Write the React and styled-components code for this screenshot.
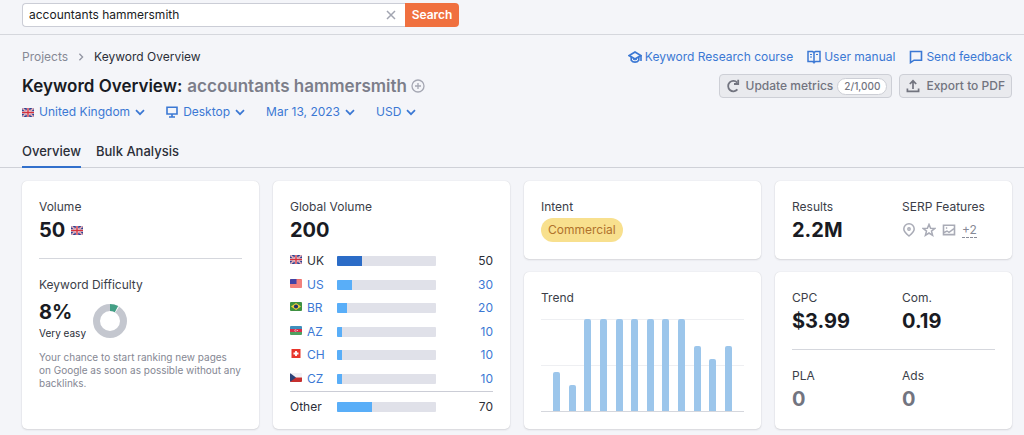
import React from 'react'
import styled, { createGlobalStyle } from 'styled-components'

const countries = [
    { code: 'UK', flag: 'uk', value: 50, share: 25, current: true },
    { code: 'US', flag: 'us', value: 30, share: 15 },
    { code: 'BR', flag: 'br', value: 20, share: 10 },
    { code: 'AZ', flag: 'az', value: 10, share: 5 },
    { code: 'CH', flag: 'ch', value: 10, share: 5 },
    { code: 'CZ', flag: 'cz', value: 10, share: 5 },
]

const trend = [42, 28, 100, 100, 100, 100, 100, 100, 100, 71, 56, 71]

const flags = {
    uk: (
        <>
            <rect width="12" height="8" fill="#2f3f8f" />
            <path d="M0 0L12 8M12 0L0 8" stroke="#f3eef2" strokeWidth="1.4" />
            <path d="M0 0L12 8M12 0L0 8" stroke="#d8434e" strokeWidth="0.6" />
            <path d="M6 0V8M0 4H12" stroke="#f3eef2" strokeWidth="2.4" />
            <path d="M6 0V8M0 4H12" stroke="#d5323f" strokeWidth="1.4" />
        </>
    ),
    us: (
        <>
            <rect width="12" height="9" fill="#f0706c" />
            <path d="M0 2H12M0 4H12M0 6H12M0 8H12" stroke="#f7a19c" strokeWidth="0.7" />
            <rect width="6.5" height="5" fill="#4143a5" />
        </>
    ),
    br: (
        <>
            <rect width="12" height="9" fill="#3f9142" />
            <path d="M1 4.5L6 1L11 4.5L6 8Z" fill="#f2d13c" />
            <circle cx="6" cy="4.5" r="2.1" fill="#23336b" />
        </>
    ),
    az: (
        <>
            <rect width="12" height="3" fill="#3f8fbd" />
            <rect y="3" width="12" height="3" fill="#d8304a" />
            <rect y="6" width="12" height="3" fill="#4fa05f" />
            <circle cx="5.6" cy="4.5" r="1.1" fill="#fff" />
            <circle cx="6" cy="4.5" r="0.8" fill="#d8304a" />
            <circle cx="7.3" cy="4.5" r="0.5" fill="#fff" />
        </>
    ),
    ch: (
        <>
            <rect x="1.5" width="9" height="9" fill="#e8352b" />
            <path d="M6 2V7M3.5 4.5H8.5" stroke="#fff" strokeWidth="1.8" />
        </>
    ),
    cz: (
        <>
            <rect width="12" height="4.5" fill="#f1f0f4" />
            <rect y="4.5" width="12" height="4.5" fill="#c6302f" />
            <path d="M0 0L6 4.5L0 9Z" fill="#2b4277" />
        </>
    ),
}

const Flag = ({ name }) => (
    <FlagSvg viewBox={name === 'uk' ? '0 0 12 8' : '0 0 12 9'} preserveAspectRatio="none" aria-hidden="true">
        {flags[name]}
    </FlagSvg>
)

const Chevron = () => (
    <Icon viewBox="0 0 10 10" $size={10}>
        <path d="M1 3.2L5 7.2L9 3.2" strokeWidth="1.7" />
    </Icon>
)

const App = () => {
    return (
        <Page>
            <GlobalStyle />
            <TopBar>
                <SearchForm onSubmit={(e) => e.preventDefault()}>
                    <SearchField>
                        <input type="text" aria-label="Keyword" defaultValue="accountants hammersmith" />
                        <ClearButton type="reset" aria-label="Clear">
                            <Icon viewBox="0 0 10 10" $size={10}>
                                <path d="M1 1L9 9M9 1L1 9" strokeWidth="1.5" />
                            </Icon>
                        </ClearButton>
                    </SearchField>
                    <SearchButton type="submit">Search</SearchButton>
                </SearchForm>
            </TopBar>

            <Header>
                <Row>
                    <Breadcrumbs aria-label="Breadcrumb">
                        <a href="#">Projects</a>
                        <Icon viewBox="0 0 8 10" $size={8}>
                            <path d="M2 1L6 5L2 9" strokeWidth="1.6" />
                        </Icon>
                        <span>Keyword Overview</span>
                    </Breadcrumbs>
                    <HelpLinks>
                        <a href="#">
                            <Icon viewBox="0 0 14 14" $size={14}>
                                <path d="M7 2L1.2 5.6L7 9L12.8 5.6Z" strokeWidth="1.7" />
                                <path d="M3.2 7V10.2C5 12.8 9 12.8 10.8 10.2V7M13 6V11" strokeWidth="1.6" />
                                <path d="M5 9.2C6 10 8 10 9 9.2" strokeWidth="1" />
                            </Icon>
                            Keyword Research course
                        </a>
                        <a href="#">
                            <Icon viewBox="0 0 14 14" $size={14}>
                                <path d="M1 1.5H5.5L7 2.3L8.5 1.5H13V11.5H8.5L7 12.3L5.5 11.5H1ZM7 2V13.5" strokeWidth="1.5" />
                                <path d="M3 4.5H5M3 7H5M9 4.5H11" strokeWidth="1.2" />
                            </Icon>
                            User manual
                        </a>
                        <a href="#">
                            <Icon viewBox="0 0 14 14" $size={14}>
                                <path d="M1.5 1.5H12.5V10.2H5L1.5 12.6Z" strokeWidth="1.6" />
                            </Icon>
                            Send feedback
                        </a>
                    </HelpLinks>
                </Row>
                <TitleRow>
                    <Title>
                        Keyword Overview:
                        <span>accountants hammersmith</span>
                        <AddButton type="button" aria-label="Add keyword">
                            <Icon viewBox="0 0 14 14" $size={14}>
                                <circle cx="7" cy="7" r="6" strokeWidth="1.3" />
                                <path d="M7 4V10M4 7H10" strokeWidth="1.3" />
                            </Icon>
                        </AddButton>
                    </Title>
                    <Actions>
                        <ActionButton type="button">
                            <Icon viewBox="0 0 14 14" $size={14}>
                                <path d="M11.2 3.6A5.2 5.2 0 1 0 11.4 10.4" strokeWidth="1.8" />
                                <path d="M12.2 0.8V5H8" strokeWidth="1.8" />
                            </Icon>
                            <span>Update metrics</span>
                            <Counter>2/1,000</Counter>
                        </ActionButton>
                        <ActionButton type="button">
                            <Icon viewBox="0 0 14 14" $size={14}>
                                <path d="M7 10V2.2M3.8 5L7 1.8L10.2 5" strokeWidth="1.7" />
                                <path d="M1.4 9.5V12.4H12.6V9.5" strokeWidth="1.7" />
                            </Icon>
                            <span>Export to PDF</span>
                        </ActionButton>
                    </Actions>
                </TitleRow>
                <Filters>
                    <FilterButton type="button"><Flag name="uk" />United Kingdom<Chevron /></FilterButton>
                    <FilterButton type="button">
                        <Icon viewBox="0 0 12 12" $size={12}>
                            <path d="M1 1.2H11V8H1ZM6 8V10.6M3 11H9" strokeWidth="1.6" />
                        </Icon>
                        Desktop<Chevron />
                    </FilterButton>
                    <FilterButton type="button">Mar 13, 2023<Chevron /></FilterButton>
                    <FilterButton type="button">USD<Chevron /></FilterButton>
                </Filters>
            </Header>

            <Tabs>
                <Tab href="#" $active aria-current="page">Overview</Tab>
                <Tab href="#">Bulk Analysis</Tab>
            </Tabs>

            <Cards>
                <Card $tall>
                    <Label>Volume</Label>
                    <Value>50 <Flag name="uk" /></Value>
                    <Divider />
                    <Label>Keyword Difficulty</Label>
                    <Difficulty>
                        <div>
                            <Value>8%</Value>
                            <Level>Very easy</Level>
                        </div>
                        <Donut viewBox="0 0 34 34" aria-hidden="true">
                            <circle cx="17" cy="17" r="13.5" stroke="#c4c7cf" />
                            <circle cx="17" cy="17" r="13.5" stroke="#fff" pathLength="100" strokeDasharray="9 91" transform="rotate(-90 17 17)" />
                            <circle cx="17" cy="17" r="13.5" stroke="#439f85" pathLength="100" strokeDasharray="8 92" transform="rotate(-90 17 17)" />
                        </Donut>
                    </Difficulty>
                    <Note>
                        Your chance to start ranking new pages<br />
                        on Google as soon as possible without any backlinks.
                    </Note>
                </Card>

                <Card $tall>
                    <Label>Global Volume</Label>
                    <Value>200</Value>
                    <CountryTable aria-label="Volume by country">
                        <tbody>
                            {countries.map((c) => (
                                <tr key={c.code}>
                                    <th scope="row">
                                        <Country>
                                            <Flag name={c.flag} />
                                            {c.current ? <span>{c.code}</span> : <a href="#">{c.code}</a>}
                                        </Country>
                                    </th>
                                    <td><Track><Fill $dark={c.current} style={{ width: `${c.share}%` }} /></Track></td>
                                    <td>{c.current ? c.value : <a href="#">{c.value}</a>}</td>
                                </tr>
                            ))}
                        </tbody>
                        <tfoot>
                            <tr>
                                <th scope="row">Other</th>
                                <td><Track><Fill style={{ width: '35%' }} /></Track></td>
                                <td>70</td>
                            </tr>
                        </tfoot>
                    </CountryTable>
                </Card>

                <Card>
                    <Label>Intent</Label>
                    <Badge>Commercial</Badge>
                </Card>

                <Card>
                    <Columns>
                        <div>
                            <Label>Results</Label>
                            <Value>2.2M</Value>
                        </div>
                        <div>
                            <Label>SERP Features</Label>
                            <Features>
                                <Icon viewBox="0 0 14 14" $size={14}>
                                    <path d="M7 13C4 10.6 1.8 8.6 1.8 6A5.2 5.2 0 0 1 12.2 6C12.2 8.6 10 10.6 7 13Z" strokeWidth="1.5" />
                                    <circle cx="7" cy="6" r="1.2" strokeWidth="1.4" />
                                </Icon>
                                <Icon viewBox="0 0 14 14" $size={14}>
                                    <path d="M7 1.4L8.6 5.2L12.7 5.5L9.5 8.1L10.6 12.3L7 10L3.4 12.3L4.5 8.1L1.3 5.5L5.4 5.2Z" strokeWidth="1.5" />
                                </Icon>
                                <Icon viewBox="0 0 14 14" $size={14}>
                                    <path d="M1.5 2.2H12.5V11.6H1.5Z" strokeWidth="1.6" />
                                    <path d="M2 9.5L5 8L7 9.4L12 5.6" strokeWidth="1.4" />
                                    <circle cx="4.6" cy="5" r="0.5" strokeWidth="1" />
                                </Icon>
                                <a href="#">+2</a>
                            </Features>
                        </div>
                    </Columns>
                </Card>

                <Card>
                    <Label>Trend</Label>
                    <Chart role="img" aria-label="Monthly search trend">
                        {trend.map((t, i) => (
                            <Bar key={i} style={{ height: `${t}%` }} />
                        ))}
                    </Chart>
                </Card>

                <Card>
                    <Columns>
                        <div>
                            <Label>CPC</Label>
                            <Value>$3.99</Value>
                        </div>
                        <div>
                            <Label>Com.</Label>
                            <Value>0.19</Value>
                        </div>
                    </Columns>
                    <Divider />
                    <Columns>
                        <div>
                            <Label>PLA</Label>
                            <Value $muted>0</Value>
                        </div>
                        <div>
                            <Label>Ads</Label>
                            <Value $muted>0</Value>
                        </div>
                    </Columns>
                </Card>
            </Cards>
        </Page>
    )
}

export default App

const GlobalStyle = createGlobalStyle`
    *{
        box-sizing:border-box;
    }
    body{
        margin:0;
        background-color:#f4f5f9;
    }
    body, button, input{
        font-family:Inter, "Liberation Sans", sans-serif;
        font-size:12px;
        line-height:18px;
        color:#2b2e38;
    }
    button{
        padding:0;
        border:0;
        background:none;
        cursor:pointer;
    }
    a{
        color:#3b78d4;
        text-decoration:none;
    }
`

const Page = styled.div`
    min-width:900px;
    padding-bottom:6px;
`

const Icon = styled.svg`
    width:${(p) => p.$size}px;
    height:${(p) => p.$size}px;
    flex:none;
    fill:none;
    stroke:currentColor;
`

const FlagSvg = styled.svg`
    width:12px;
    height:9px;
    flex:none;
    border-radius:1px;
`

const TopBar = styled.div`
    padding:3px 22px 7px;
    border-bottom:1px solid #d5d7dd;
`

const SearchForm = styled.form`
    display:flex;
    width:437px;
    height:24px;
`

const SearchField = styled.div`
    display:flex;
    flex:1;
    align-items:center;
    background-color:#fff;
    border:1px solid #cbcdd6;
    border-right:0;
    border-radius:4px 0 0 4px;
    input{
        flex:1;
        min-width:0;
        padding:0 6px;
        border:0;
        outline:0;
        background:none;
        color:#191b23;
    }
`

const ClearButton = styled.button`
    display:flex;
    padding:4px 9px;
    color:#a2a5b1;
`

const SearchButton = styled.button`
    width:54px;
    background-color:#f0703f;
    border-radius:0 4px 4px 0;
    color:#fff;
    font-weight:600;
`

const Header = styled.header`
    padding:13px 12px 0 22px;
`

const Row = styled.div`
    display:flex;
    justify-content:space-between;
    align-items:center;
`

const TitleRow = styled(Row)`
    margin-top:8px;
`

const Breadcrumbs = styled.nav`
    display:flex;
    align-items:center;
    gap:9px;
    color:#9295a2;
    a{
        color:#868995;
    }
    span{
        color:#2b2e38;
    }
`

const HelpLinks = styled.nav`
    display:flex;
    gap:14px;
    a{
        display:flex;
        align-items:center;
        gap:3px;
    }
`

const Title = styled.h1`
    display:flex;
    align-items:center;
    margin:0;
    font-size:17px;
    line-height:24px;
    font-weight:600;
    color:#191b23;
    span{
        margin-left:5px;
        color:#7c7e8a;
    }
`

const AddButton = styled.button`
    display:flex;
    margin-left:4px;
    color:#a5a7b3;
`

const Actions = styled.div`
    display:flex;
    gap:7px;
`

const ActionButton = styled.button`
    display:flex;
    align-items:center;
    height:24px;
    padding:0 6px;
    background-color:#e9eaee;
    border:1px solid #cdcfd6;
    border-radius:4px;
    color:#72747f;
    font-weight:500;
    span{
        margin-left:6px;
    }
`

const Counter = styled.b`
    margin:0 -2px 0 4px;
    padding:0 6px;
    background-color:#fff;
    border:1px solid #cdcfd6;
    border-radius:9px;
    font-size:10px;
    line-height:15px;
    font-weight:500;
`

const Filters = styled.div`
    display:flex;
    gap:21px;
    margin-top:5px;
`

const FilterButton = styled.button`
    display:flex;
    align-items:center;
    gap:5px;
    color:#3b78d4;
`

const Tabs = styled.nav`
    display:flex;
    gap:15px;
    margin-top:21px;
    padding-left:22px;
    border-bottom:1px solid #cfd1d8;
`

const Tab = styled.a`
    padding-bottom:6px;
    margin-bottom:-1px;
    border-bottom:2px solid ${(p) => (p.$active ? '#3270cc' : 'transparent')};
    color:#2b2e38;
    font-size:13px;
    font-weight:500;
`

const Cards = styled.main`
    display:grid;
    grid-template-columns:repeat(4, minmax(0, 1fr));
    grid-template-rows:auto 1fr;
    gap:13px 14px;
    padding:13px 12px 0 22px;
`

const Card = styled.section`
    grid-row:${(p) => (p.$tall ? 'span 2' : 'auto')};
    padding:17px 17px ${(p) => (p.$tall ? 13 : 17)}px;
    background-color:#fff;
    border-radius:5px;
    box-shadow:0 0 1px rgba(25, 27, 35, 0.16), 0 1px 2px rgba(25, 27, 35, 0.12);
`

const Label = styled.h2`
    margin:0 0 2px;
    font-size:12px;
    line-height:18px;
    font-weight:400;
    color:#3b3e48;
`

const Value = styled.div`
    display:flex;
    align-items:center;
    gap:6px;
    font-size:20px;
    line-height:24px;
    font-weight:700;
    color:${(p) => (p.$muted ? '#72747f' : '#191b23')};
`

const Divider = styled.hr`
    margin:16px 0 17px;
    border:0;
    border-top:1px solid #d5d7dd;
`

const Difficulty = styled.div`
    display:flex;
    align-items:center;
    gap:7px;
    margin-top:6px;
`

const Level = styled.div`
    padding-top:1px;
    font-size:10px;
    line-height:16px;
`

const Donut = styled.svg`
    width:34px;
    height:34px;
    fill:none;
    stroke-width:7;
`

const Note = styled.p`
    margin:10px 0 0;
    font-size:10px;
    line-height:13px;
    color:#858793;
`

const CountryTable = styled.table`
    width:100%;
    margin-top:7px;
    border-spacing:0;
    th, td{
        padding:0;
        font-weight:400;
        text-align:left;
    }
    th{
        width:47px;
    }
    td:last-child{
        width:28%;
        text-align:right;
    }
    tbody tr{
        height:24px;
    }
    tbody tr:nth-child(2), tbody tr:nth-child(4){
        height:23px;
    }
    tfoot th, tfoot td{
        padding-top:6px;
        border-top:1px solid #cbcdd6;
    }
`

const Country = styled.div`
    display:flex;
    align-items:center;
    gap:5px;
    ${FlagSvg}{
        margin-bottom:3px;
    }
`

const Track = styled.div`
    height:10px;
    overflow:hidden;
    background-color:#e0e1e9;
    border-radius:1px;
`

const Fill = styled.div`
    height:100%;
    background-color:${(p) => (p.$dark ? '#2b6cc7' : '#59aef8')};
`

const Badge = styled.span`
    display:inline-block;
    padding:0 7px;
    background-color:#f8e08e;
    border-radius:12px;
    line-height:24px;
    color:#b0722c;
`

const Columns = styled.div`
    display:grid;
    grid-template-columns:110px 1fr;
`

const Features = styled.div`
    display:flex;
    align-items:center;
    gap:6px;
    height:24px;
    color:#a9abb6;
    a{
        border-bottom:1px dashed #8a8d99;
        line-height:15px;
        color:#868995;
    }
`

const Chart = styled.div`
    display:flex;
    justify-content:space-between;
    align-items:flex-end;
    height:93px;
    margin-top:12px;
    padding:0 12px;
    border-bottom:1px solid #d5d7dd;
    background:linear-gradient(#eeeff2, #eeeff2) 0 0 / 100% 1px no-repeat, linear-gradient(#eeeff2, #eeeff2) 0 50% / 100% 1px no-repeat;
`

const Bar = styled.div`
    width:7px;
    background-color:#9cc6eb;
    border-radius:2px 2px 0 0;
`
